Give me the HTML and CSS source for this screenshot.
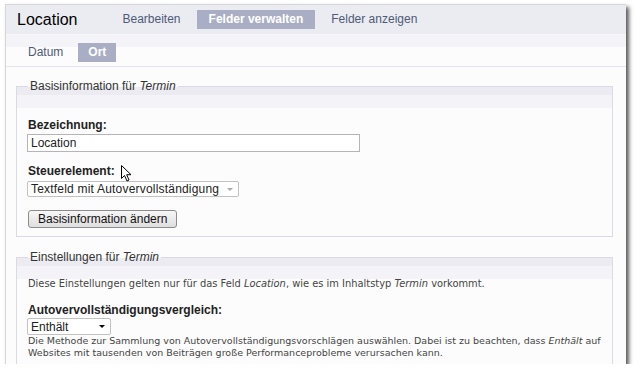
FILE: index.html
```html
<!DOCTYPE html>
<html lang="de">
<head>
    <meta charset="UTF-8">
    <title>Location – Felder verwalten</title>
    <link rel="stylesheet" href="styles.css">
</head>
<body>

<div class="window">
    <div class="header">
        <h1 class="title">Location</h1>
        <ul class="tabs">
            <li class="tab">Bearbeiten</li>
            <li class="tab active">Felder verwalten</li>
            <li class="tab">Felder anzeigen</li>
        </ul>
    </div>

    <ul class="subtabs">
        <li class="tab">Datum</li>
        <li class="tab active">Ort</li>
    </ul>

    <div class="content">
        <fieldset class="group">
            <legend>Basisinformation für <em>Termin</em></legend>

            <div class="form-item">
                <label class="label" for="label">Bezeichnung:</label>
                <input class="text-input" id="label" type="text" value="Location">
            </div>

            <div class="form-item">
                <label class="label">Steuerelement:</label>
                <div class="select wide">
                    <span>Textfeld mit Autovervollständigung</span>
                    <span class="arrow light"></span>
                </div>
            </div>

            <button class="button" type="button">Basisinformation ändern</button>
        </fieldset>

        <fieldset class="group">
            <legend>Einstellungen für <em>Termin</em></legend>

            <p class="intro">Diese Einstellungen gelten nur für das Feld <em>Location</em>, wie es im Inhaltstyp <em>Termin</em> vorkommt.</p>

            <div class="form-item">
                <label class="label">Autovervollständigungsvergleich:</label>
                <div class="select narrow">
                    <span>Enthält</span>
                    <span class="arrow"></span>
                </div>
                <div class="description">Die Methode zur Sammlung von Autovervollständigungsvorschlägen auswählen. Dabei ist zu beachten, dass <em>Enthält</em> auf<br>Websites mit tausenden von Beiträgen große Performanceprobleme verursachen kann.</div>
            </div>
        </fieldset>
    </div>

    <!-- mouse pointer sitting next to "Steuerelement:" -->
    <svg class="cursor" width="11" height="17" viewBox="0 0 11 17">
        <path d="M0.5 0.5 L0.5 13.5 L3.5 10.5 L6 16 L8 15 L5.7 9.7 L10 9.7 Z" fill="#fff" stroke="#000" stroke-width="1" stroke-linejoin="round"/>
    </svg>
</div>

</body>
</html>
```

FILE: styles.css
```css
body {
    margin: 0;
    background: #ffffff;
    font-family: "Liberation Sans", Arial, sans-serif;
    font-size: 12px;
    color: #222;
}

ul {
    list-style: none;
    margin: 0;
    padding: 0;
}

.window {
    position: relative;
    width: 620px;
    height: 359px;
    margin: 4px 0 0 5px;
    overflow: hidden;
    background: #fcfcfc;
    border-top: 1px solid #d6d6d6;
    border-left: 1px solid #d6d6d6;
    box-shadow: 3px 3px 4px rgba(0, 0, 0, 0.65);
}

/* top bar with page title and primary tabs */
.header {
    display: flex;
    align-items: center;
    height: 29px;
    padding-left: 11px;
    background: #ebecf1;
    border-bottom: 1px solid #f7f7f9;
}

.title {
    margin: 0 34px 0 0;
    font-size: 16px;
    font-weight: normal;
    color: #000;
}

.tabs,
.subtabs {
    display: flex;
    align-items: center;
    gap: 4px;
}

.tabs {
    gap: 5px;
}

.tab {
    height: 19px;
    line-height: 19px;
    padding: 0 11px;
    color: #4f5a78;
}

.tab.active {
    background: #a9aec5;
    color: #fff;
    font-weight: bold;
}

.tabs .tab.active {
    padding: 0 12px;
}

/* secondary tabs */
.subtabs {
    box-sizing: border-box;
    height: 32px;
    padding: 3px 0 0 12px;
    gap: 5px;
    background: linear-gradient(#f3f3f8 0, #f3f3f8 12px, #fcfcfd 12px);
    border-bottom: 1px solid #e3e4e9;
}

.subtabs .tab {
    padding: 0 10px;
}

.content {
    padding: 12px 13px 0 10px;
}

.group {
    margin: 0 0 13px;
    padding: 0 11px 8px;
    border: 1px solid #d9dae4;
    min-inline-size: 0;
    background: linear-gradient(#ebebf1 0, #ebebf1 8px, #f3f3f8 8px, #f3f3f8 21px, #fcfcfc 21px);
}

.group legend {
    padding: 0 2px;
    color: #333;
}

.form-item {
    margin-top: 24px;
}

.form-item + .form-item {
    margin-top: 11px;
}

.label {
    display: block;
    font-weight: bold;
    line-height: 16px;
    color: #222;
}

.text-input {
    display: block;
    box-sizing: border-box;
    width: 333px;
    height: 18px;
    margin: 1px 0 0 -1px;
    padding: 0 3px;
    border: 1px solid #b5b5b5;
    background: #fff;
    font: inherit;
    color: #222;
}

.select {
    display: flex;
    align-items: center;
    justify-content: space-between;
    box-sizing: border-box;
    height: 16px;
    margin: 2px 0 0 -1px;
    padding: 0 5px 0 3px;
    border: 1px solid #c2c2c2;
    border-radius: 2px;
    background: #fff;
}

.select.wide {
    width: 212px;
    letter-spacing: 0.2px;
}

.select.narrow {
    width: 84px;
    height: 17px;
    margin-top: 0;
}

.arrow {
    width: 0;
    height: 0;
    border-left: 3px solid transparent;
    border-right: 3px solid transparent;
    border-top: 3px solid #000;
}

.arrow.light {
    border-top-color: #aaa;
}

.button {
    display: block;
    height: 18px;
    margin-top: 13px;
    padding: 0 9px;
    border: 1px solid #8c8c8c;
    border-radius: 3px;
    background: linear-gradient(#f7f7f7, #dedede);
    font: inherit;
    color: #111;
}

.intro {
    margin: 13px 0 0;
    font-family: "DejaVu Sans", Verdana, sans-serif;
    font-size: 9.9px;
    line-height: 14px;
    color: #444;
}

.group .intro + .form-item {
    margin-top: 11px;
}

.description {
    font-family: "DejaVu Sans", Verdana, sans-serif;
    font-size: 9.5px;
    line-height: 12px;
    white-space: nowrap;
    color: #444;
}

.cursor {
    position: absolute;
    left: 115px;
    top: 160px;
}
```
